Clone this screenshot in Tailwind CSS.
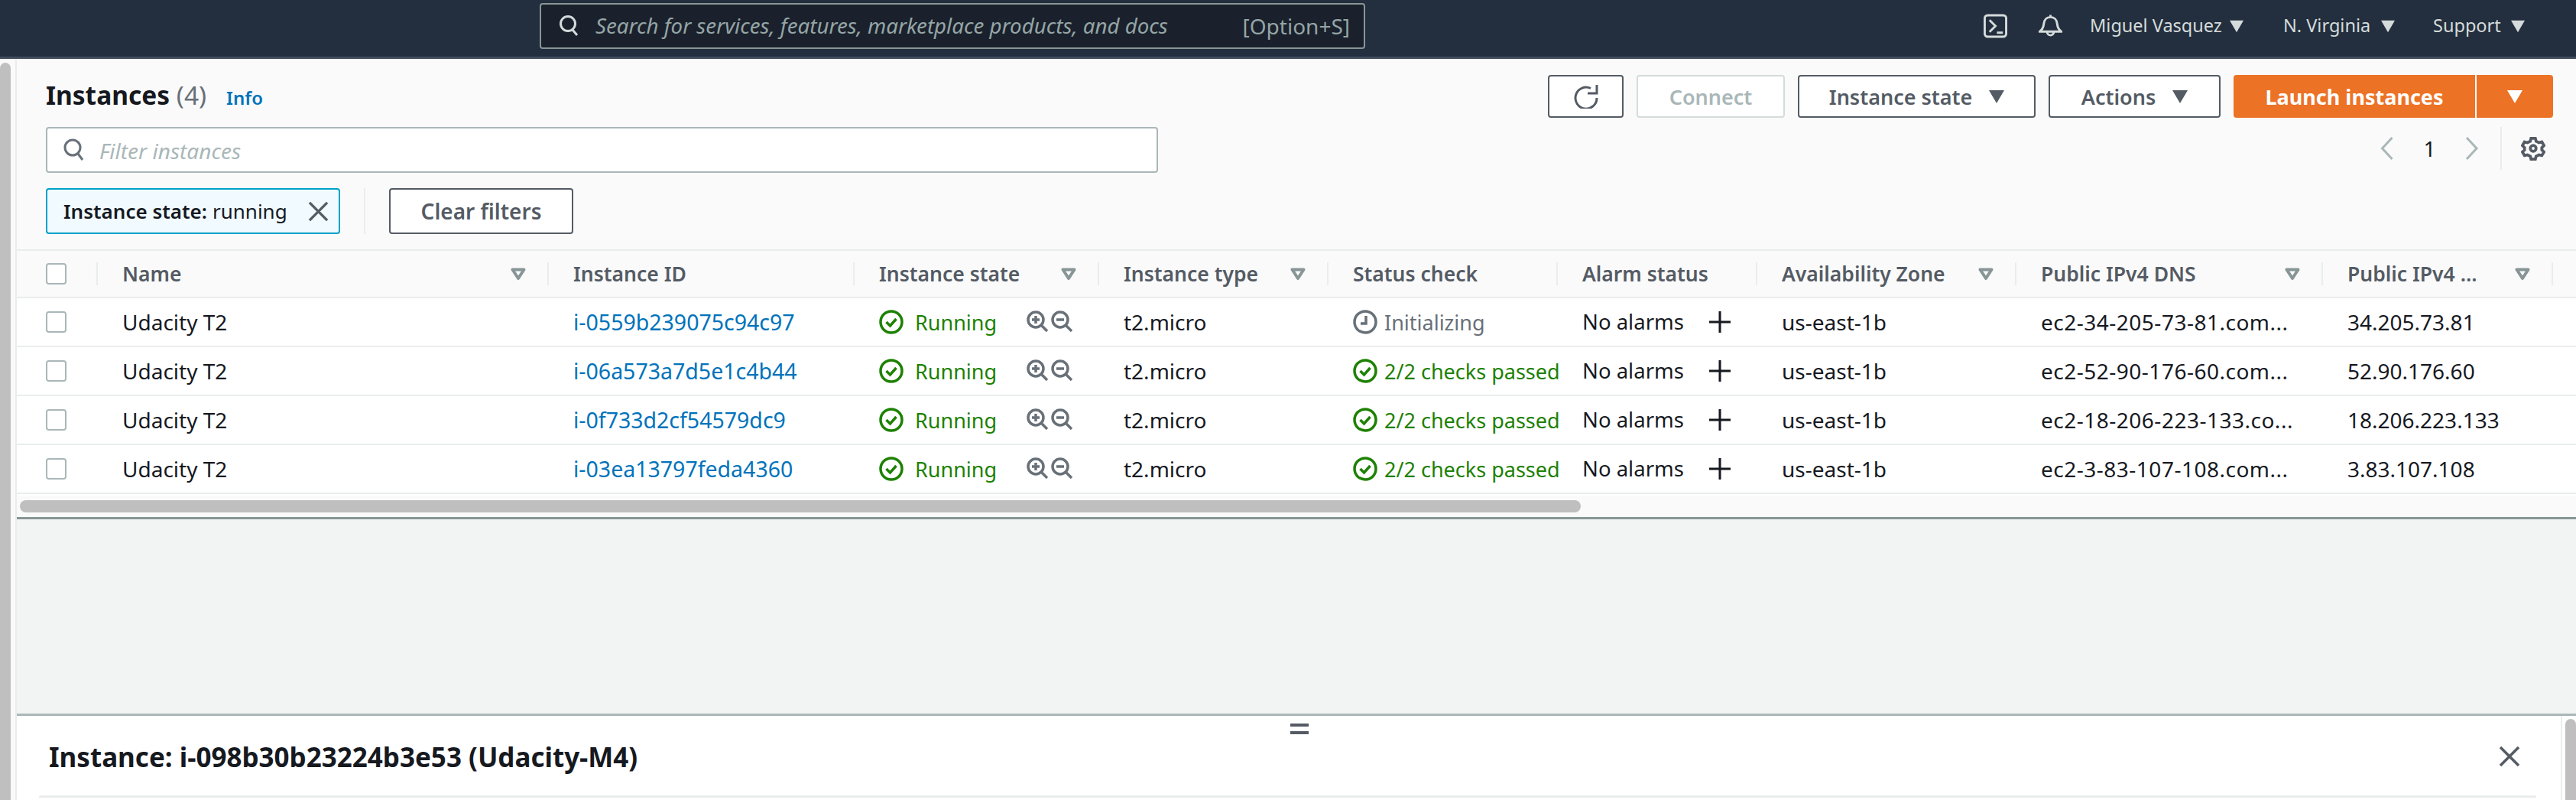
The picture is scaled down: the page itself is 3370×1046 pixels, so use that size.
<!DOCTYPE html>
<html lang="en">
<head>
  <meta charset="utf-8" />
  <title>Instances | EC2</title>
  <script src="https://cdn.jsdelivr.net/npm/@tailwindcss/browser@4"></script>
</head>
<body class="h-[1046px] overflow-hidden bg-white font-['Noto_Sans',sans-serif] text-[28px] leading-none text-[#16191f]">

  <!-- TOP BAR -->
  <header class="flex h-[77px] items-start border-b-[3px] border-[#414d5c] bg-[#232f3e] pl-[706px]">
    <div class="mt-[4px] flex h-[60px] w-[1080px] shrink-0 items-center rounded-[4px] border-2 border-[#879596] bg-[#1a212c] pl-[22px] text-[#95a5a6]">
      <svg class="h-[30px] w-[30px] text-[#d5dbdb]" viewBox="0 0 30 30" fill="none" stroke="currentColor" stroke-width="3"><circle cx="13" cy="12" r="9.500"/><path d="M19 20l6 7"/></svg>
      <span class="ml-[19px] text-[27.700px] italic">Search for services, features, marketplace products, and docs</span>
      <span class="ml-auto mr-[18px]">[Option+S]</span>
    </div>
    <div class="ml-[809px] mt-[18px] flex items-center whitespace-nowrap text-[23.500px] text-[#d5dbdb]">
      <svg class="h-[32px] w-[31px]" viewBox="0 0 32 32" fill="none" stroke="currentColor" stroke-width="3"><rect x="1.500" y="1.500" width="29" height="29" rx="4"/><path d="M8 8l8 8-8 8M18 25h8"/></svg>
      <svg class="ml-[41px] h-[32px] w-[31px]" viewBox="0 0 32 32" fill="none" stroke="currentColor" stroke-width="3"><path d="M1.500 23.500h29c-4-3-5-6-5.500-10.500C24.500 7.500 21 4 16 4S7.500 7.500 7 13c-.5 4.500-1.500 7.500-5.500 10.500zM16 1v3M11.500 24a4.500 4.500 0 0 0 9 0"/></svg>
      <span class="ml-[36px] w-[183px]">Miguel Vasquez</span>
      <svg class="h-[17px] w-[18px]" viewBox="0 0 20 17" fill="currentColor"><path d="M0 0h20L10 17z"/></svg>
      <span class="ml-[52px] w-[128px]">N. Virginia</span>
      <svg class="h-[17px] w-[18px]" viewBox="0 0 20 17" fill="currentColor"><path d="M0 0h20L10 17z"/></svg>
      <span class="ml-[50px] w-[102px]">Support</span>
      <svg class="h-[17px] w-[18px]" viewBox="0 0 20 17" fill="currentColor"><path d="M0 0h20L10 17z"/></svg>
    </div>
  </header>

  <div class="flex h-[969px]">
    <!-- LEFT SCROLLBAR -->
    <div class="h-full w-[22px] shrink-0 border-r-2 border-[#eaeded] bg-[#fafafa] pt-[5px]">
      <div class="h-full w-[14px] rounded-t-[7px] bg-[#bfbfbf]"></div>
    </div>

    <main class="flex min-w-0 flex-1 flex-col bg-[#f2f3f3]">
      <!-- TOOLBAR -->
      <section class="h-[251px] border-b-2 border-[#eaeded] bg-[#fafafa]">
        <div class="flex h-[89px] items-start pl-[38px]">
          <h1 class="mt-[31px] whitespace-nowrap text-[33.500px] font-bold">Instances <span class="font-normal text-[#687078]">(4)</span></h1>
          <a class="ml-[26px] mt-[39px] text-[24px] font-semibold text-[#0073bb]">Info</a>
          <div class="ml-auto mr-[30px] mt-[21px] flex items-center gap-[17px] text-[27px] font-semibold text-[#545b64]">
            <button class="flex h-[56px] w-[99px] items-center justify-center rounded-[4px] border-2 border-[#545b64] bg-white">
              <svg class="h-[32px] w-[32px]" viewBox="0 0 32 32" fill="none" stroke="currentColor" stroke-width="3"><path d="M22 5.500A14 14 0 1 0 30 18M30 1v11H18"/></svg>
            </button>
            <button class="h-[56px] w-[194px] rounded-[4px] border-2 border-[#d5dbdb] bg-white text-[#aab7b8]">Connect</button>
            <button class="flex h-[56px] w-[311px] items-center justify-center gap-[22px] rounded-[4px] border-2 border-[#545b64] bg-white">Instance state
              <svg class="h-[17px] w-[20px]" viewBox="0 0 20 17" fill="currentColor"><path d="M0 0h20L10 17z"/></svg>
            </button>
            <button class="flex h-[56px] w-[225px] items-center justify-center gap-[22px] rounded-[4px] border-2 border-[#545b64] bg-white">Actions
              <svg class="h-[17px] w-[20px]" viewBox="0 0 20 17" fill="currentColor"><path d="M0 0h20L10 17z"/></svg>
            </button>
            <div class="flex gap-[2px] text-white">
              <button class="h-[56px] w-[316px] rounded-l-[4px] bg-[#ec7226] font-bold">Launch instances</button>
              <button class="flex h-[56px] w-[100px] items-center justify-center rounded-r-[4px] bg-[#ec7226]">
                <svg class="h-[17px] w-[20px]" viewBox="0 0 20 17" fill="currentColor"><path d="M0 0h20L10 17z"/></svg>
              </button>
            </div>
          </div>
        </div>

        <div class="flex h-[60px] items-start pl-[38px]">
          <div class="flex h-[60px] w-[1455px] items-center rounded-[4px] border-2 border-[#aab7b8] bg-white pl-[20px]">
            <svg class="h-[32px] w-[30px] text-[#687078]" viewBox="0 0 30 32" fill="none" stroke="currentColor" stroke-width="3"><circle cx="13" cy="13" r="10"/><path d="M20 21l6 8"/></svg>
            <span class="ml-[18px] mt-[2px] italic text-[#aab7b8]">Filter instances</span>
          </div>
          <div class="ml-auto flex h-[56px] items-center">
            <svg class="h-[32px] w-[19px] text-[#aab7b8]" viewBox="0 0 18 32" fill="none" stroke="currentColor" stroke-width="3"><path d="M16 2L3 16l13 14"/></svg>
            <span class="w-[93px] text-center text-[#16191f]">1</span>
            <svg class="h-[32px] w-[18px] text-[#aab7b8]" viewBox="0 0 18 32" fill="none" stroke="currentColor" stroke-width="3"><path d="M2 2l13 14L2 30"/></svg>
            <div class="ml-[28px] flex h-[56px] w-[99px] items-center border-l-2 border-[#eaeded] pl-[25px]">
              <svg class="h-[32px] w-[32px] text-[#545b64]" viewBox="0 0 34 34" fill="none" stroke="currentColor" stroke-width="4"><path d="M14 3h6l1 4 4 2 4-1 3 5-3 3v3l3 3-3 5-4-1-4 2-1 4h-6l-1-4-4-2-4 1-3-5 3-3v-3l-3-3 3-5 4 1 4-2z"/><circle cx="17" cy="17" r="4"/></svg>
            </div>
          </div>
        </div>

        <div class="mt-[20px] flex items-center pl-[38px]">
          <div class="flex h-[60px] w-[385px] items-center rounded-[4px] border-2 border-[#00a1c9] bg-[#f1faff] pl-[21px] text-[26px] whitespace-nowrap">
            <span class="font-semibold">Instance state:</span><span class="ml-[7px]">running</span>
            <svg class="ml-auto mr-[13px] h-[27px] w-[27px] text-[#545b64]" viewBox="0 0 28 28" fill="none" stroke="currentColor" stroke-width="3.500"><path d="M2 2l24 24M26 2L2 26"/></svg>
          </div>
          <div class="ml-[31px] h-[60px] w-[2px] bg-[#eaeded]"></div>
          <button class="ml-[31px] h-[60px] w-[241px] rounded-[4px] border-2 border-[#545b64] bg-white text-[28px] font-semibold text-[#545b64]">Clear filters</button>
        </div>
      </section>

      <!-- TABLE -->
      <section id="table" class="h-[351px] border-b-[3px] border-[#879596] bg-[#fafafa]">
        <div id="thead" class="grid h-[62px] grid-cols-[104px_590px_400px_320px_300px_300px_261px_339px_401px_301px_32px] border-b-2 border-[#eaeded] bg-[#fafafa]"></div>
        <div id="tbody"></div>
        <div class="h-[2px] bg-white"></div>
        <div class="ml-[4px] mt-[6px] h-[16px] w-[2042px] rounded-full bg-[#bfbfbf]"></div>
      </section>

      <div class="h-[254px]"></div>

      <!-- SPLIT PANEL -->
      <section class="relative flex-1 border-t-[3px] border-[#aab7b8] bg-white">
        <div class="absolute left-[1666px] top-[10px] flex flex-col gap-[6px]">
          <div class="h-[4px] w-[24px] bg-[#545b64]"></div>
          <div class="h-[4px] w-[24px] bg-[#545b64]"></div>
        </div>
        <div class="absolute bottom-0 right-0 top-0 w-[20px] border-l-2 border-[#eaeded] pl-[4px] pt-[4px]">
          <div class="h-full w-[14px] rounded-t-[7px] bg-[#bfbfbf]"></div>
        </div>
        <div class="flex h-[104px] items-center justify-between pl-[42px] pr-[73px] pt-[2px]">
          <h2 class="text-[35px] font-bold whitespace-nowrap">Instance: i-098b30b23224b3e53 (Udacity-M4)</h2>
          <svg class="h-[28px] w-[28px] text-[#545b64]" viewBox="0 0 28 28" fill="none" stroke="currentColor" stroke-width="3.500"><path d="M2 2l24 24M26 2L2 26"/></svg>
        </div>
        <div class="ml-[29px] mr-[52px] h-[3px] rounded-t-[2px] bg-[#eaeded]"></div>
      </section>
    </main>
  </div>

  <script>
    const caretOutline = `<svg class="h-[17px] w-[20px] shrink-0 text-[#879596]" viewBox="0 0 20 17" fill="none" stroke="currentColor" stroke-width="4" stroke-linejoin="round"><path d="M2.500 2.500h15L10 14z"/></svg>`;
    const okIcon = `<svg class="h-[32px] w-[32px] shrink-0" viewBox="0 0 32 32" fill="none" stroke="#1d8102" stroke-width="3.500"><circle cx="16" cy="16" r="14"/><path d="M9.500 16l5 5 8-9"/></svg>`;
    const clockIcon = `<svg class="h-[32px] w-[32px] shrink-0" viewBox="0 0 32 32" fill="none" stroke="#687078" stroke-width="3.500"><circle cx="16" cy="16" r="14"/><path d="M17 8v10h-7"/></svg>`;
    const zoomIn = `<svg class="h-[30px] w-[30px] shrink-0" viewBox="0 0 30 30" fill="none" stroke="#687078" stroke-width="3.500"><circle cx="12" cy="12" r="10"/><path d="M19 19l8 8M7 12h10M12 7v10"/></svg>`;
    const zoomOut = `<svg class="ml-[2px] h-[30px] w-[30px] shrink-0" viewBox="0 0 30 30" fill="none" stroke="#687078" stroke-width="3.500"><circle cx="12" cy="12" r="10"/><path d="M19 19l8 8M7 12h10"/></svg>`;
    const plus = `<svg class="h-[28px] w-[28px] shrink-0 text-[#16191f]" viewBox="0 0 28 28" fill="none" stroke="currentColor" stroke-width="3"><path d="M14 0v28M0 14h28"/></svg>`;
    const checkbox = `<div class="h-[28px] w-[27px] rounded-[4px] border-2 border-[#aab7b8] bg-white"></div>`;

    /* header cells */
    const heads = [
      ['Name', 1], ['Instance ID', 0], ['Instance state', 1], ['Instance type', 1],
      ['Status check', 0], ['Alarm status', 0], ['Availability Zone', 1], ['Public IPv4 DNS', 1], ['Public IPv4 ...', 1]
    ];
    let head = `<div class="flex items-center pl-[38px]"><div>${checkbox}</div><div class="-mr-[2px] ml-auto h-[30px] w-[2px] bg-[#eaeded]"></div></div>`;
    head += heads.map(([label, sort]) => `
      <div class="flex items-center justify-between pl-[34px]">
        <span class="whitespace-nowrap text-[26.500px] font-semibold text-[#545b64]">${label}</span>
        <span class="-mr-[2px] flex items-center gap-[28px]">${sort ? caretOutline : ''}<span class="h-[30px] w-[2px] bg-[#eaeded]"></span></span>
      </div>`).join('');
    head += `<div></div>`;
    document.getElementById('thead').innerHTML = head;

    /* rows */
    const rows = [
      ['i-0559b239075c94c97', false, 'ec2-34-205-73-81.com...', '34.205.73.81'],
      ['i-06a573a7d5e1c4b44', true,  'ec2-52-90-176-60.com...', '52.90.176.60'],
      ['i-0f733d2cf54579dc9', true,  'ec2-18-206-223-133.co...', '18.206.223.133'],
      ['i-03ea13797feda4360', true,  'ec2-3-83-107-108.com...', '3.83.107.108']
    ];
    document.getElementById('tbody').innerHTML = rows.map(([id, passed, dns, ip]) => `
      <div class="grid h-[64px] grid-cols-[104px_590px_400px_320px_300px_303px_258px_339px_401px_301px_32px] border-b-2 border-[#eaeded] bg-white">
        <div class="flex items-center pl-[38px]">${checkbox}</div>
        <div class="flex items-center pl-[34px]">Udacity T2</div>
        <div class="flex items-center pl-[34px] text-[28.500px] text-[#0073bb]">${id}</div>
        <div class="flex items-center pl-[34px] text-[27px] text-[#1d8102]">${okIcon}<span class="ml-[15px] w-[146px]">Running</span>${zoomIn}${zoomOut}</div>
        <div class="flex items-center pl-[34px]">t2.micro</div>
        <div class="flex items-center overflow-hidden whitespace-nowrap pl-[34px] text-[27px] ${passed ? 'text-[#1d8102]' : 'text-[#687078]'}">${passed ? okIcon : clockIcon}<span class="ml-[9px]">${passed ? '2/2 checks passed' : 'Initializing'}</span></div>
        <div class="flex items-center whitespace-nowrap pl-[31px] text-[27.500px]"><span class="w-[166px]">No alarms</span>${plus}</div>
        <div class="flex items-center pl-[34px]">us-east-1b</div>
        <div class="flex items-center whitespace-nowrap pl-[34px] tracking-[0.5px]">${dns}</div>
        <div class="flex items-center pl-[34px]">${ip}</div>
        <div></div>
      </div>`).join('');
  </script>
</body>
</html>
